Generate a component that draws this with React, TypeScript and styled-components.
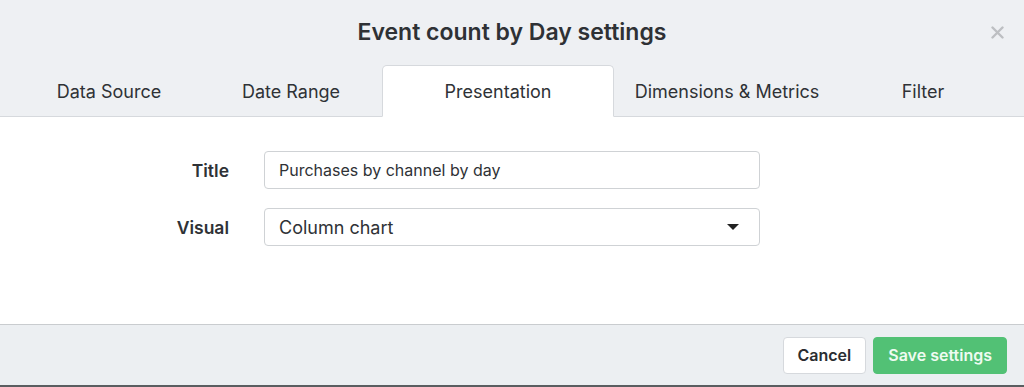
import React from 'react';
import styled, { createGlobalStyle } from 'styled-components';

const GlobalStyle = createGlobalStyle`
  html, body {
    margin: 0;
    padding: 0;
    background: #ffffff;
    font-family: Inter, "Noto Sans", sans-serif;
    color: #2f3236;
  }
`;

const Dialog = styled.div`
  width: 1024px;
  height: 387px;
  display: flex;
  flex-direction: column;
  background: #ffffff;
  box-sizing: border-box;
`;

const Header = styled.div`
  background: #eef0f3;
`;

const TitleBar = styled.div`
  height: 65px;
  display: flex;
  align-items: center;
  justify-content: center;
  position: relative;
`;

const DialogTitle = styled.h2`
  margin: 0 0 2px;
  font-size: 23px;
  font-weight: 600;
  color: #2e3135;
`;

const CloseButton = styled.button`
  position: absolute;
  right: 19px;
  top: 24px;
  width: 16px;
  height: 16px;
  padding: 0;
  border: none;
  background: transparent;
  display: flex;
  align-items: center;
  justify-content: center;
  cursor: pointer;
`;

const TabRow = styled.div`
  display: flex;
  height: 51px;
  padding-left: 18px;
  border-bottom: 1px solid #d6d9dd;
`;

const Tab = styled.div<{ $width: number; $active?: boolean }>`
  width: ${(p) => p.$width}px;
  flex: none;
  box-sizing: border-box;
  display: flex;
  align-items: center;
  justify-content: center;
  font-size: 18px;
  color: #2f3236;
  border-radius: 5px 5px 0 0;
  margin-bottom: -1px;
  background: ${(p) => (p.$active ? '#ffffff' : 'transparent')};
  border: 1px solid ${(p) => (p.$active ? '#d6d9dd' : 'transparent')};
  border-bottom-color: ${(p) => (p.$active ? '#ffffff' : 'transparent')};
`;

const Body = styled.div`
  flex: 1;
  display: flex;
  flex-direction: column;
  gap: 19px;
  padding-top: 34px;
  border-bottom: 1px solid #c9cccf;
`;

const FieldRow = styled.div`
  display: flex;
  align-items: center;
`;

const Label = styled.label`
  width: 264px;
  padding-right: 35px;
  box-sizing: border-box;
  text-align: right;
  font-size: 17.5px;
  font-weight: 600;
  color: #2f3236;
`;

const TextInput = styled.input`
  width: 496px;
  height: 38px;
  box-sizing: border-box;
  border: 1px solid #cfd2d5;
  border-radius: 4px;
  padding: 0 14px;
  font-family: Inter, "Noto Sans", sans-serif;
  font-size: 16px;
  color: #2f3236;
  outline: none;
`;

const SelectBox = styled.div`
  width: 496px;
  height: 38px;
  box-sizing: border-box;
  border: 1px solid #cfd2d5;
  border-radius: 4px;
  padding: 0 20px 0 14px;
  display: flex;
  align-items: center;
  justify-content: space-between;
  font-size: 18px;
  color: #2f3236;
`;

const Caret = styled.span`
  width: 0;
  height: 0;
  border-left: 6px solid transparent;
  border-right: 6px solid transparent;
  border-top: 6px solid #222;
`;

const Footer = styled.div`
  height: 62px;
  background: #eceff2;
  display: flex;
  align-items: center;
  justify-content: flex-end;
  gap: 7px;
  padding-right: 17px;
  border-bottom: 2px solid #5a5d60;
  box-sizing: border-box;
`;

const Button = styled.button<{ $primary?: boolean }>`
  height: 37px;
  padding: 0 14px;
  border-radius: 4px;
  font-family: Inter, "Noto Sans", sans-serif;
  font-size: 16px;
  font-weight: 600;
  cursor: pointer;
  border: 1px solid ${(p) => (p.$primary ? '#52c175' : '#d6d9dd')};
  background: ${(p) => (p.$primary ? '#52c175' : '#ffffff')};
  color: ${(p) => (p.$primary ? '#eefbf1' : '#2a2d31')};
`;

const tabs = [
  { label: 'Data Source', width: 182 },
  { label: 'Date Range', width: 182 },
  { label: 'Presentation', width: 232, active: true },
  { label: 'Dimensions & Metrics', width: 226 },
  { label: 'Filter', width: 166 },
];

const App = () => {
  return (
    <Dialog>
      <GlobalStyle />
      <Header>
        <TitleBar>
          <DialogTitle>Event count by Day settings</DialogTitle>
          <CloseButton aria-label="Close">
            <svg width="13" height="13" viewBox="0 0 13 13">
              <path d="M1.5 1.5 L11.5 11.5 M11.5 1.5 L1.5 11.5" stroke="#bdbfc2" strokeWidth="2.4" strokeLinecap="round" />
            </svg>
          </CloseButton>
        </TitleBar>
        <TabRow>
          {tabs.map((t) => (
            <Tab key={t.label} $width={t.width} $active={t.active}>
              {t.label}
            </Tab>
          ))}
        </TabRow>
      </Header>

      <Body>
        <FieldRow>
          <Label>Title</Label>
          <TextInput defaultValue="Purchases by channel by day" />
        </FieldRow>
        <FieldRow>
          <Label>Visual</Label>
          <SelectBox>
            Column chart
            <Caret />
          </SelectBox>
        </FieldRow>
      </Body>

      <Footer>
        <Button>Cancel</Button>
        <Button $primary>Save settings</Button>
      </Footer>
    </Dialog>
  );
};

export default App;
